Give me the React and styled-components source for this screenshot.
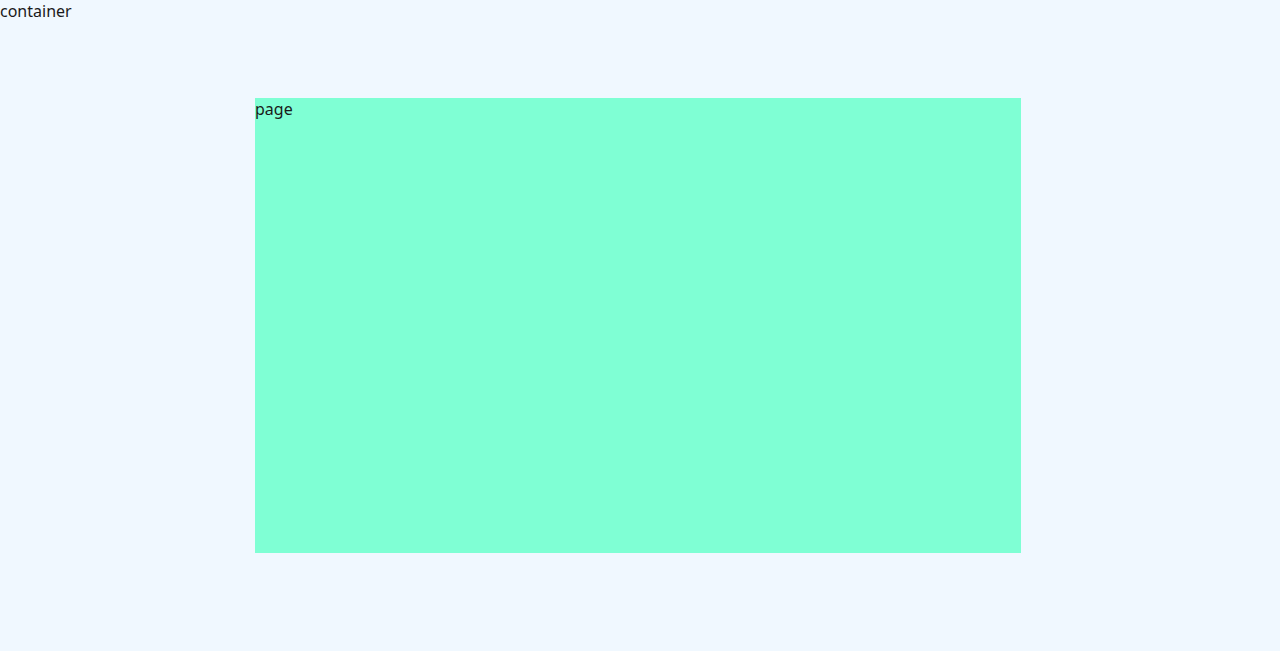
import React from "react";
import styled, { createGlobalStyle } from "styled-components";

const Global = createGlobalStyle`
  html, body { margin: 0; padding: 0; background: #f0f8ff; }
  body { font-family: "Noto Sans", "Open Sans", sans-serif; font-size: 16px; color: #1a1a1a; }
`;

const Container = styled.div`
  box-sizing: border-box;
  width: 100%;
  height: 651px;
  background: #f0f8ff;
  padding-right: 3px;
  display: flex;
  flex-direction: column;
`;

const Label = styled.div`
  line-height: 22px;
  height: 22px;
`;

const Page = styled.div`
  width: 766px;
  height: 455px;
  margin: 76px 0 0 255px;
  background: #7fffd4;
  line-height: 22px;
`;

export default function App() {
  return (
    <>
      <Global />
      <Container>
        <Label>container</Label>
        <Page>page</Page>
      </Container>
    </>
  );
}
